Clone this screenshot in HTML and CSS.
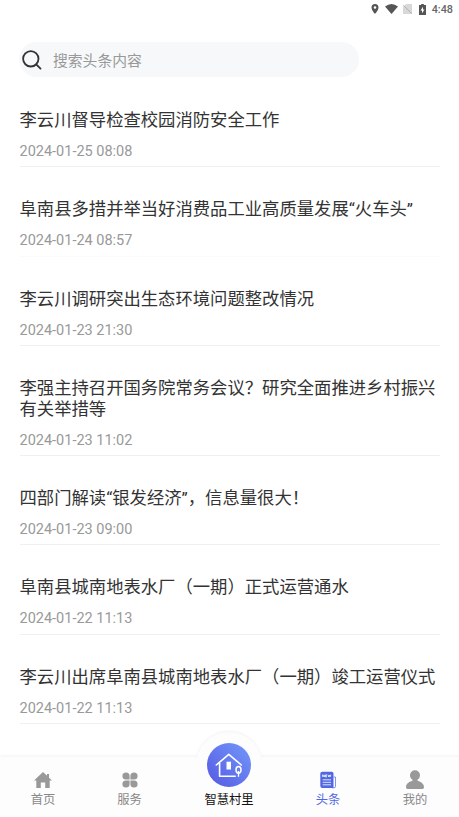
FILE: index.html
```html
<!DOCTYPE html>
<html lang="zh-CN">
<head>
<meta charset="utf-8">
<title>头条</title>
<link rel="stylesheet" href="styles.css">
</head>
<body>
<div class="screen">
  <header class="status">
    <svg class="pin" viewBox="0 0 8 10"><path fill-rule="evenodd" d="M4 0a3.5 3.5 0 0 0-3.5 3.5C.5 6.2 4 10 4 10s3.500-3.800 3.500-6.500A3.500 3.500 0 0 0 4 0Zm0 2.200a1.300 1.300 0 1 1 0 2.600 1.300 1.300 0 0 1 0-2.600Z"/></svg>
    <svg class="wifi" viewBox="0 0 13 10"><path d="M0 2.500Q6.500-2.500 13 2.500L6.500 10Z"/></svg>
    <svg class="sim" viewBox="0 0 9 10"><path d="M3 0h6v10H0V3Z" fill="#d8d8d8"/><path d="M.3 1.200 8.700 9.500" stroke="#aaa" stroke-width=".9"/></svg>
    <svg class="battery" viewBox="0 0 7 11"><path fill-rule="evenodd" d="M2.200 0h2.600v1H7v10H0V1h2.200ZM4 2.800 1.500 6.500H3v2.700L5.500 5.500H4Z"/></svg>
    <span class="clock">4:48</span>
  </header>
  <div class="search">
    <svg class="search-icon" viewBox="0 0 20 20"><circle cx="8.800" cy="8.800" r="7.700"/><path d="m14.200 14.300 4.300 4.300"/></svg>
    <span>搜索头条内容</span>
  </div>
  <main class="list">
    <article><h2>李云川督导检查校园消防安全工作</h2><time>2024-01-25 08:08</time></article>
    <article class="faint"><h2>阜南县多措并举当好消费品工业高质量发展“火车头”</h2><time>2024-01-24 08:57</time></article>
    <article><h2>李云川调研突出生态环境问题整改情况</h2><time>2024-01-23 21:30</time></article>
    <article><h2>李强主持召开国务院常务会议？研究全面推进乡村振兴有关举措等</h2><time>2024-01-23 11:02</time></article>
    <article><h2>四部门解读“银发经济”，信息量很大！</h2><time>2024-01-23 09:00</time></article>
    <article><h2>阜南县城南地表水厂（一期）正式运营通水</h2><time>2024-01-22 11:13</time></article>
    <article><h2>李云川出席阜南县城南地表水厂（一期）竣工运营仪式</h2><time>2024-01-22 11:13</time></article>
  </main>
  <nav class="tabs">
    <a class="tab">
      <svg viewBox="0 0 20 20"><path d="M10 2 1 10.500h2.300V18h4.500v-5.500h4.400V18h4.500v-7.500H19L16 7.700V4h-2v1.800Z"/></svg>
      <span>首页</span>
    </a>
    <a class="tab">
      <svg viewBox="0 0 20 20"><path d="M9.600 9.600H6a3.600 3.600 0 1 1 3.600-3.600ZM10.400 9.600V6A3.600 3.600 0 1 1 14 9.600ZM9.600 10.400v3.600A3.600 3.600 0 1 1 6 10.400ZM10.400 10.400H14a3.600 3.600 0 1 1-3.600 3.600Z"/></svg>
      <span>服务</span>
    </a>
    <a class="tab center">
      <div class="bump"></div>
      <svg class="village" viewBox="0 0 44 44">
        <defs><linearGradient id="g" x1="1" y1="0" x2="0" y2="1"><stop offset="0" stop-color="#7299fa"/><stop offset="1" stop-color="#5558e2"/></linearGradient></defs>
        <circle cx="22" cy="22" r="22" fill="url(#g)"/>
        <path d="M9.300 22 21.800 11.300 34.300 22M12.600 20v13.300h15.600" fill="none" stroke="#fff" stroke-width="1.600" stroke-linecap="round" stroke-linejoin="round"/>
        <path d="M19.500 18.700h4.500v7.800h-4.500Z" fill="#fff"/>
        <ellipse cx="31.500" cy="26.800" rx="2.500" ry="3.400" fill="none" stroke="#fff" stroke-width="1.500"/><path d="M31.500 28v5.800" stroke="#fff" stroke-width="1.300"/>
      </svg>
      <span>智慧村里</span>
    </a>
    <a class="tab active">
      <svg viewBox="0 0 20 20"><path d="M4.300 1.800h9.400a1.800 1.800 0 0 1 1.800 1.800V18H4.300a2 2 0 0 1-2-2V3.800a2 2 0 0 1 2-2Z"/><path d="M15.500 7h2v9.300a1.500 1.500 0 0 1-1.500 1.500h-2" fill="none" stroke="#5268e3" stroke-width=".7"/><path d="M4.700 7V4.700L6.300 7V4.700M9 4.900H7.500v2H9M7.500 5.900H9M10 4.700l.7 2.200.7-1.700.7 1.700.7-2.200M4.700 9.800h8.300M4.700 12.300h8.300M4.700 14.800h8.300" fill="none" stroke="#fff" stroke-width=".8"/></svg>
      <span>头条</span>
    </a>
    <a class="tab">
      <svg viewBox="0 0 20 20"><path d="M10 .2a5 5 0 0 0-5 5c0 2 1 3.700 2.500 4.600v1C3.500 12 1 14 1 17.300q0 1.700 1.500 1.700h15q1.500 0 1.500-1.700c0-3.300-2.500-5.300-6.500-6.500v-1A5 5 0 0 0 15 5.200a5 5 0 0 0-5-5Z"/></svg>
      <span>我的</span>
    </a>
  </nav>
</div>
</body>
</html>
```
FILE: styles.css
```css
* { box-sizing: border-box; }
body {
  margin: 0;
  background: #fff;
  font-family: Roboto, "Noto Sans CJK SC", sans-serif;
}
.screen {
  height: 817px;
  display: flex;
  flex-direction: column;
  overflow: hidden;
}
.status {
  height: 42px;
  flex: none;
  display: flex;
  align-items: center;
  justify-content: flex-end;
  padding: 0 6px 24px 0;
  fill: #555;
}
.pin { width: 8px; height: 10px; margin-right: 6px; }
.wifi { width: 13px; height: 10px; margin-right: 5px; }
.sim { width: 9px; height: 10px; margin-right: 7px; }
.battery { width: 7px; height: 11px; margin-right: 6px; }
.clock { font-size: 10.8px; font-weight: 500; color: #666; line-height: 18px; padding-top: 1px; }
.search {
  width: 340px;
  height: 35px;
  flex: none;
  margin-left: 19px;
  padding-left: 3px;
  border-radius: 18px;
  background: #f6f8fa;
  display: flex;
  align-items: center;
  gap: 11px;
  font-size: 14.8px;
  color: #999;
}
.search-icon {
  width: 20px;
  height: 20px;
  fill: none;
  stroke: #333;
  stroke-width: 1.8;
  stroke-linecap: round;
}
.list { flex: 1; min-height: 0; padding: 1px 19px 0 19.500px; }
.list article {
  padding: 32px 0 5.900px;
  border-bottom: 1px solid #f0f0f0;
}
.list .faint { border-color: #fafafa; }
.list h2 {
  margin: 0 -4px 12.500px 0;
  font-size: 17.330px;
  font-weight: 400;
  line-height: 20.500px;
  color: #333;
}
.list time {
  display: block;
  font-size: 14.500px;
  line-height: 17.500px;
  color: #999;
}
.tabs {
  position: relative;
  height: 60px;
  flex: none;
  display: grid;
  grid-template-columns: 86px 87px 112px 86px 88px;
  background: #fdfdfe;
  box-shadow: 0 -1px 3px #f2f2f3;
}
.tab {
  display: flex;
  flex-direction: column;
  align-items: center;
  padding-top: 13px;
  font-size: 12.300px;
  line-height: 18px;
  color: #888;
  fill: #999;
}
.tab svg { width: 20px; height: 20px; margin-bottom: 1px; }
.active { color: #5268e3; fill: #5268e3; }
.center { position: relative; padding-top: 0; color: #111; }
.center .village { position: relative; width: 44px; height: 44px; margin: -14px 0 4px; }
.bump {
  position: absolute;
  top: -25px;
  left: 23px;
  width: 66px;
  height: 66px;
  border-radius: 50%;
  background: #fdfdfe;
  box-shadow: 0 -1px 3px #f2f2f3;
  clip-path: inset(-5px -5px 40px -5px);
}
.center span { position: relative; }
```
